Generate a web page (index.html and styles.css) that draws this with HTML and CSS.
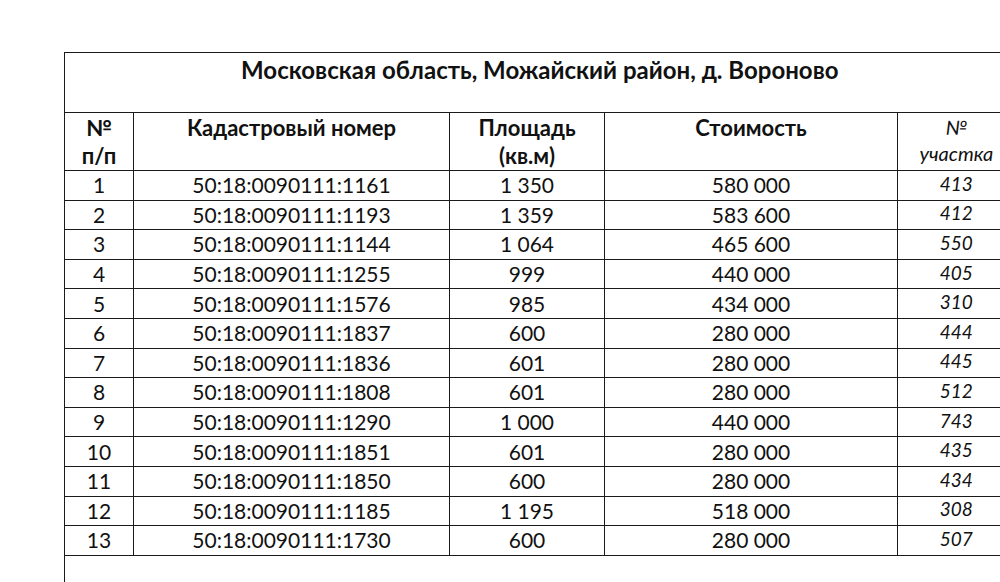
FILE: index.html
```html
<!DOCTYPE html>
<html lang="ru">
<head>
<meta charset="utf-8">
<title>Московская область, Можайский район, д. Вороново</title>
<link rel="stylesheet" href="styles.css">
</head>
<body>
<div class="page">
  <table class="plots">
    <colgroup>
      <col class="c-num">
      <col class="c-cad">
      <col class="c-area">
      <col class="c-price">
      <col class="c-plot">
    </colgroup>
    <thead>
      <tr class="title-row">
        <th colspan="5" class="title">Московская область, Можайский район, д. Вороново</th>
      </tr>
      <tr class="head-row">
        <th>№<br>п/п</th>
        <th>Кадастровый номер</th>
        <th>Площадь<br>(кв.м)</th>
        <th>Стоимость</th>
        <th class="it">№<br>участка</th>
      </tr>
    </thead>
    <tbody>
      <tr><td>1</td><td>50:18:0090111:1161</td><td>1 350</td><td>580 000</td><td class="it">413</td></tr>
      <tr><td>2</td><td>50:18:0090111:1193</td><td>1 359</td><td>583 600</td><td class="it">412</td></tr>
      <tr><td>3</td><td>50:18:0090111:1144</td><td>1 064</td><td>465 600</td><td class="it">550</td></tr>
      <tr><td>4</td><td>50:18:0090111:1255</td><td>999</td><td>440 000</td><td class="it">405</td></tr>
      <tr><td>5</td><td>50:18:0090111:1576</td><td>985</td><td>434 000</td><td class="it">310</td></tr>
      <tr><td>6</td><td>50:18:0090111:1837</td><td>600</td><td>280 000</td><td class="it">444</td></tr>
      <tr><td>7</td><td>50:18:0090111:1836</td><td>601</td><td>280 000</td><td class="it">445</td></tr>
      <tr><td>8</td><td>50:18:0090111:1808</td><td>601</td><td>280 000</td><td class="it">512</td></tr>
      <tr><td>9</td><td>50:18:0090111:1290</td><td>1 000</td><td>440 000</td><td class="it">743</td></tr>
      <tr><td>10</td><td>50:18:0090111:1851</td><td>601</td><td>280 000</td><td class="it">435</td></tr>
      <tr><td>11</td><td>50:18:0090111:1850</td><td>600</td><td>280 000</td><td class="it">434</td></tr>
      <tr><td>12</td><td>50:18:0090111:1185</td><td>1 195</td><td>518 000</td><td class="it">308</td></tr>
      <tr><td>13</td><td>50:18:0090111:1730</td><td>600</td><td>280 000</td><td class="it">507</td></tr>
    </tbody>
  </table>
  <div class="frame-tail"></div>
</div>
</body>
</html>
```

FILE: styles.css
```css
html, body {
  margin: 0;
  padding: 0;
  background: #ffffff;
  overflow: hidden;
}

body {
  font-family: Lato, Carlito, "Liberation Sans", sans-serif;
  color: #111111;
}

.page {
  box-sizing: border-box;
  width: 1000px;
  height: 582px;
  overflow: hidden;
  padding: 52px 0 0 64px;
}

.plots {
  border-collapse: collapse;
  table-layout: fixed;
  width: 950px;
  font-size: 21px;
}

.c-num { width: 69px; }
.c-cad { width: 316px; }
.c-area { width: 155px; }
.c-price { width: 293px; }
.c-plot { width: 117px; }

.plots th,
.plots td {
  border: 1.5px solid #1a1a1a;
  text-align: center;
  padding: 0;
}

.plots th:last-child,
.plots td:last-child {
  border-right: none;
}

.title-row th {
  height: 60px;
  vertical-align: top;
  font-size: 24px;
  font-weight: 700;
  line-height: 30px;
  padding-top: 2px;
  box-sizing: border-box;
}

.head-row th {
  height: 58px;
  vertical-align: top;
  font-size: 22px;
  font-weight: 700;
  line-height: 28px;
  padding-top: 1px;
  box-sizing: border-box;
}

.head-row th.it {
  font-weight: 400;
  font-style: italic;
  font-size: 20px;
  line-height: 26px;
}

.plots td {
  height: 29.6px;
  line-height: 24px;
  vertical-align: middle;
  box-sizing: border-box;
}

.plots td.it {
  font-style: italic;
  font-size: 19px;
  padding-bottom: 3px;
}

.frame-tail {
  height: 40px;
  border-left: 1.5px solid #1a1a1a;
}
```
